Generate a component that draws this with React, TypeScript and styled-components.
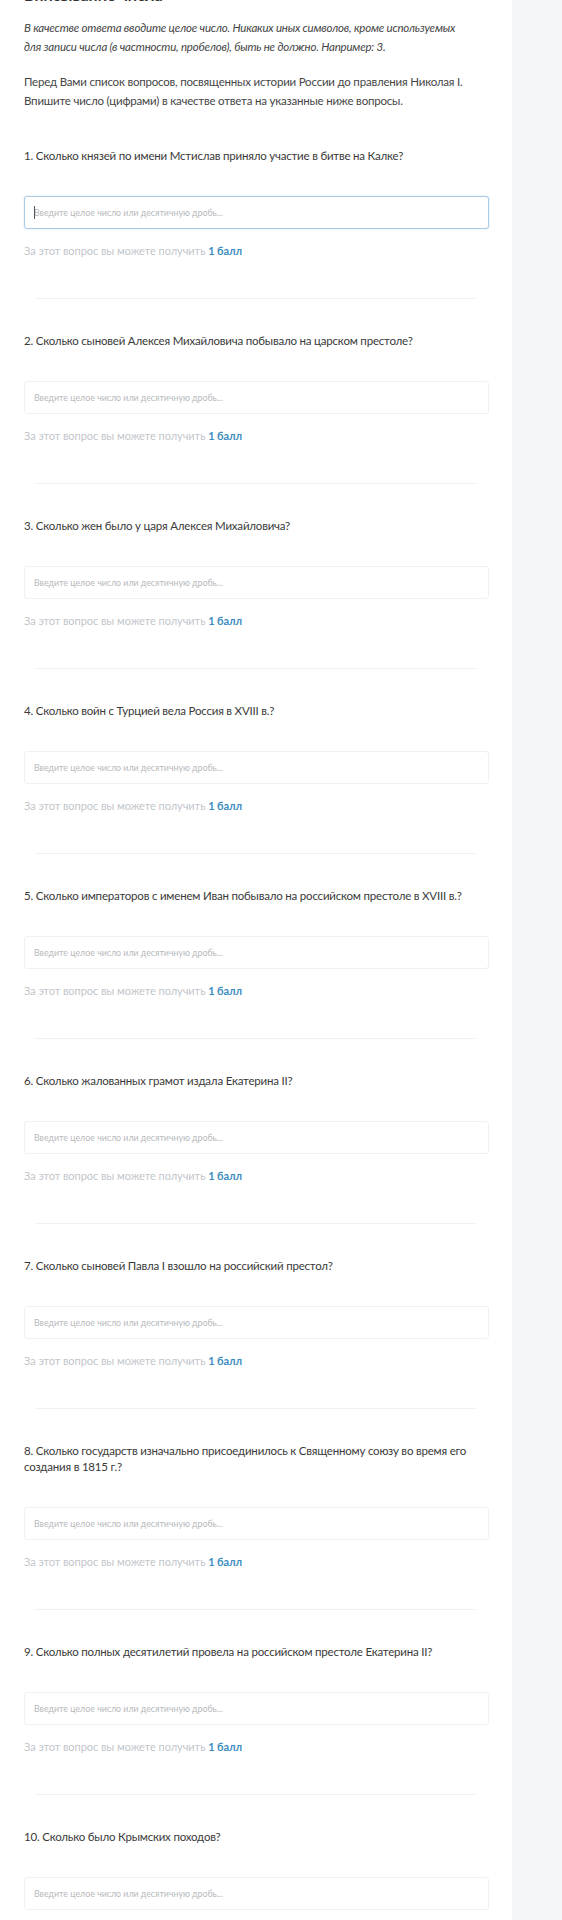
import styled, { createGlobalStyle } from 'styled-components';

const GlobalStyle = createGlobalStyle`
  html, body {
    margin: 0;
    padding: 0;
    background: #ffffff;
  }
  body {
    font-family: Lato, "Noto Sans", sans-serif;
    color: #3a3a3a;
    overflow: hidden;
  }
  * {
    box-sizing: border-box;
  }
`;

const questions: string[] = [
  'Сколько князей по имени Мстислав приняло участие в битве на Калке?',
  'Сколько сыновей Алексея Михайловича побывало на царском престоле?',
  'Сколько жен было у царя Алексея Михайловича?',
  'Сколько войн с Турцией вела Россия в XVIII в.?',
  'Сколько императоров с именем Иван побывало на российском престоле в XVIII в.?',
  'Сколько жалованных грамот издала Екатерина II?',
  'Сколько сыновей Павла I взошло на российский престол?',
  'Сколько государств изначально присоединилось к Священному союзу во время его создания в 1815 г.?',
  'Сколько полных десятилетий провела на российском престоле Екатерина II?',
  'Сколько было Крымских походов?',
];

export default function App() {
  return (
    <>
      <GlobalStyle />
      <Page>
        <Main>
          <Title>Вписывание числа</Title>
          <Hint>
            В качестве ответа вводите целое число. Никаких иных символов, кроме
            используемых для записи числа (в частности, пробелов), быть не
            должно. Например: 3.
          </Hint>
          <Intro>
            Перед Вами список вопросов, посвященных истории России до правления
            Николая I. Впишите число (цифрами) в качестве ответа на указанные
            ниже вопросы.
          </Intro>
          <List>
            {questions.map((q, i) => (
              <Question key={i}>
                <QuestionText>
                  {i + 1}. {q}
                </QuestionText>
                <InputWrapper>
                  <Input
                    focused={i === 0}
                    placeholder="Введите целое число или десятичную дробь..."
                  />
                  {i === 0 && <Caret />}
                </InputWrapper>
                <Score>
                  За этот вопрос вы можете получить <b>1 балл</b>
                </Score>
                <Divider />
              </Question>
            ))}
          </List>
        </Main>
        <Aside />
      </Page>
    </>
  );
}

const Page = styled.div`
  display: flex;
  min-height: 1920px;
`;

const Main = styled.main`
  flex: 0 0 512px;
  padding: 0 23px 0 24px;
`;

const Aside = styled.aside`
  flex: 1;
  background: #f5f6f8;
`;

const Title = styled.h2`
  margin: -15px 0 0;
  font-size: 16px;
  line-height: 20px;
  font-weight: 700;
  color: #333;
`;

const Hint = styled.p`
  margin: 13px 0 0;
  max-width: 440px;
  font-size: 11.5px;
  line-height: 19px;
  letter-spacing: -0.2px;
  font-style: italic;
  color: #454545;
`;

const Intro = styled.p`
  margin: 16px 0 0;
  font-size: 11.5px;
  line-height: 19px;
  letter-spacing: -0.2px;
  color: #454545;
`;

const List = styled.div`
  margin-top: 38px;
  display: flex;
  flex-direction: column;
`;

const Question = styled.section`
  display: flex;
  flex-direction: column;
`;

const QuestionText = styled.div`
  font-size: 11.5px;
  line-height: 16px;
  letter-spacing: -0.2px;
  color: #3a3a3a;
`;

const InputWrapper = styled.div`
  position: relative;
  margin-top: 32px;
`;

const Input = styled.input<{ focused: boolean }>`
  display: block;
  width: 100%;
  height: 33px;
  padding: 0 9px;
  font-family: Lato, "Noto Sans", sans-serif;
  font-size: 8.8px;
  border-radius: 3px;
  outline: none;
  background: #fff;
  border: ${({ focused }) => (focused ? '1.5px solid #a9cbe5' : '1px solid #eff1f3')};
  box-shadow: ${({ focused }) => (focused ? '0 0 2px rgba(120, 170, 210, 0.35)' : 'none')};
  &::placeholder {
    color: #b7b9bc;
  }
`;

const Caret = styled.span`
  position: absolute;
  left: 10px;
  top: 10px;
  width: 1px;
  height: 13px;
  background: #555;
`;

const Score = styled.div`
  margin-top: 13px;
  font-size: 11px;
  line-height: 17px;
  letter-spacing: -0.05px;
  color: #c2c6cb;
  b {
    color: #3b8dc2;
    font-weight: 700;
  }
`;

const Divider = styled.hr`
  margin: 39px 13px 34px 11px;
  border: 0;
  height: 1px;
  background: #eff0f2;
`;
